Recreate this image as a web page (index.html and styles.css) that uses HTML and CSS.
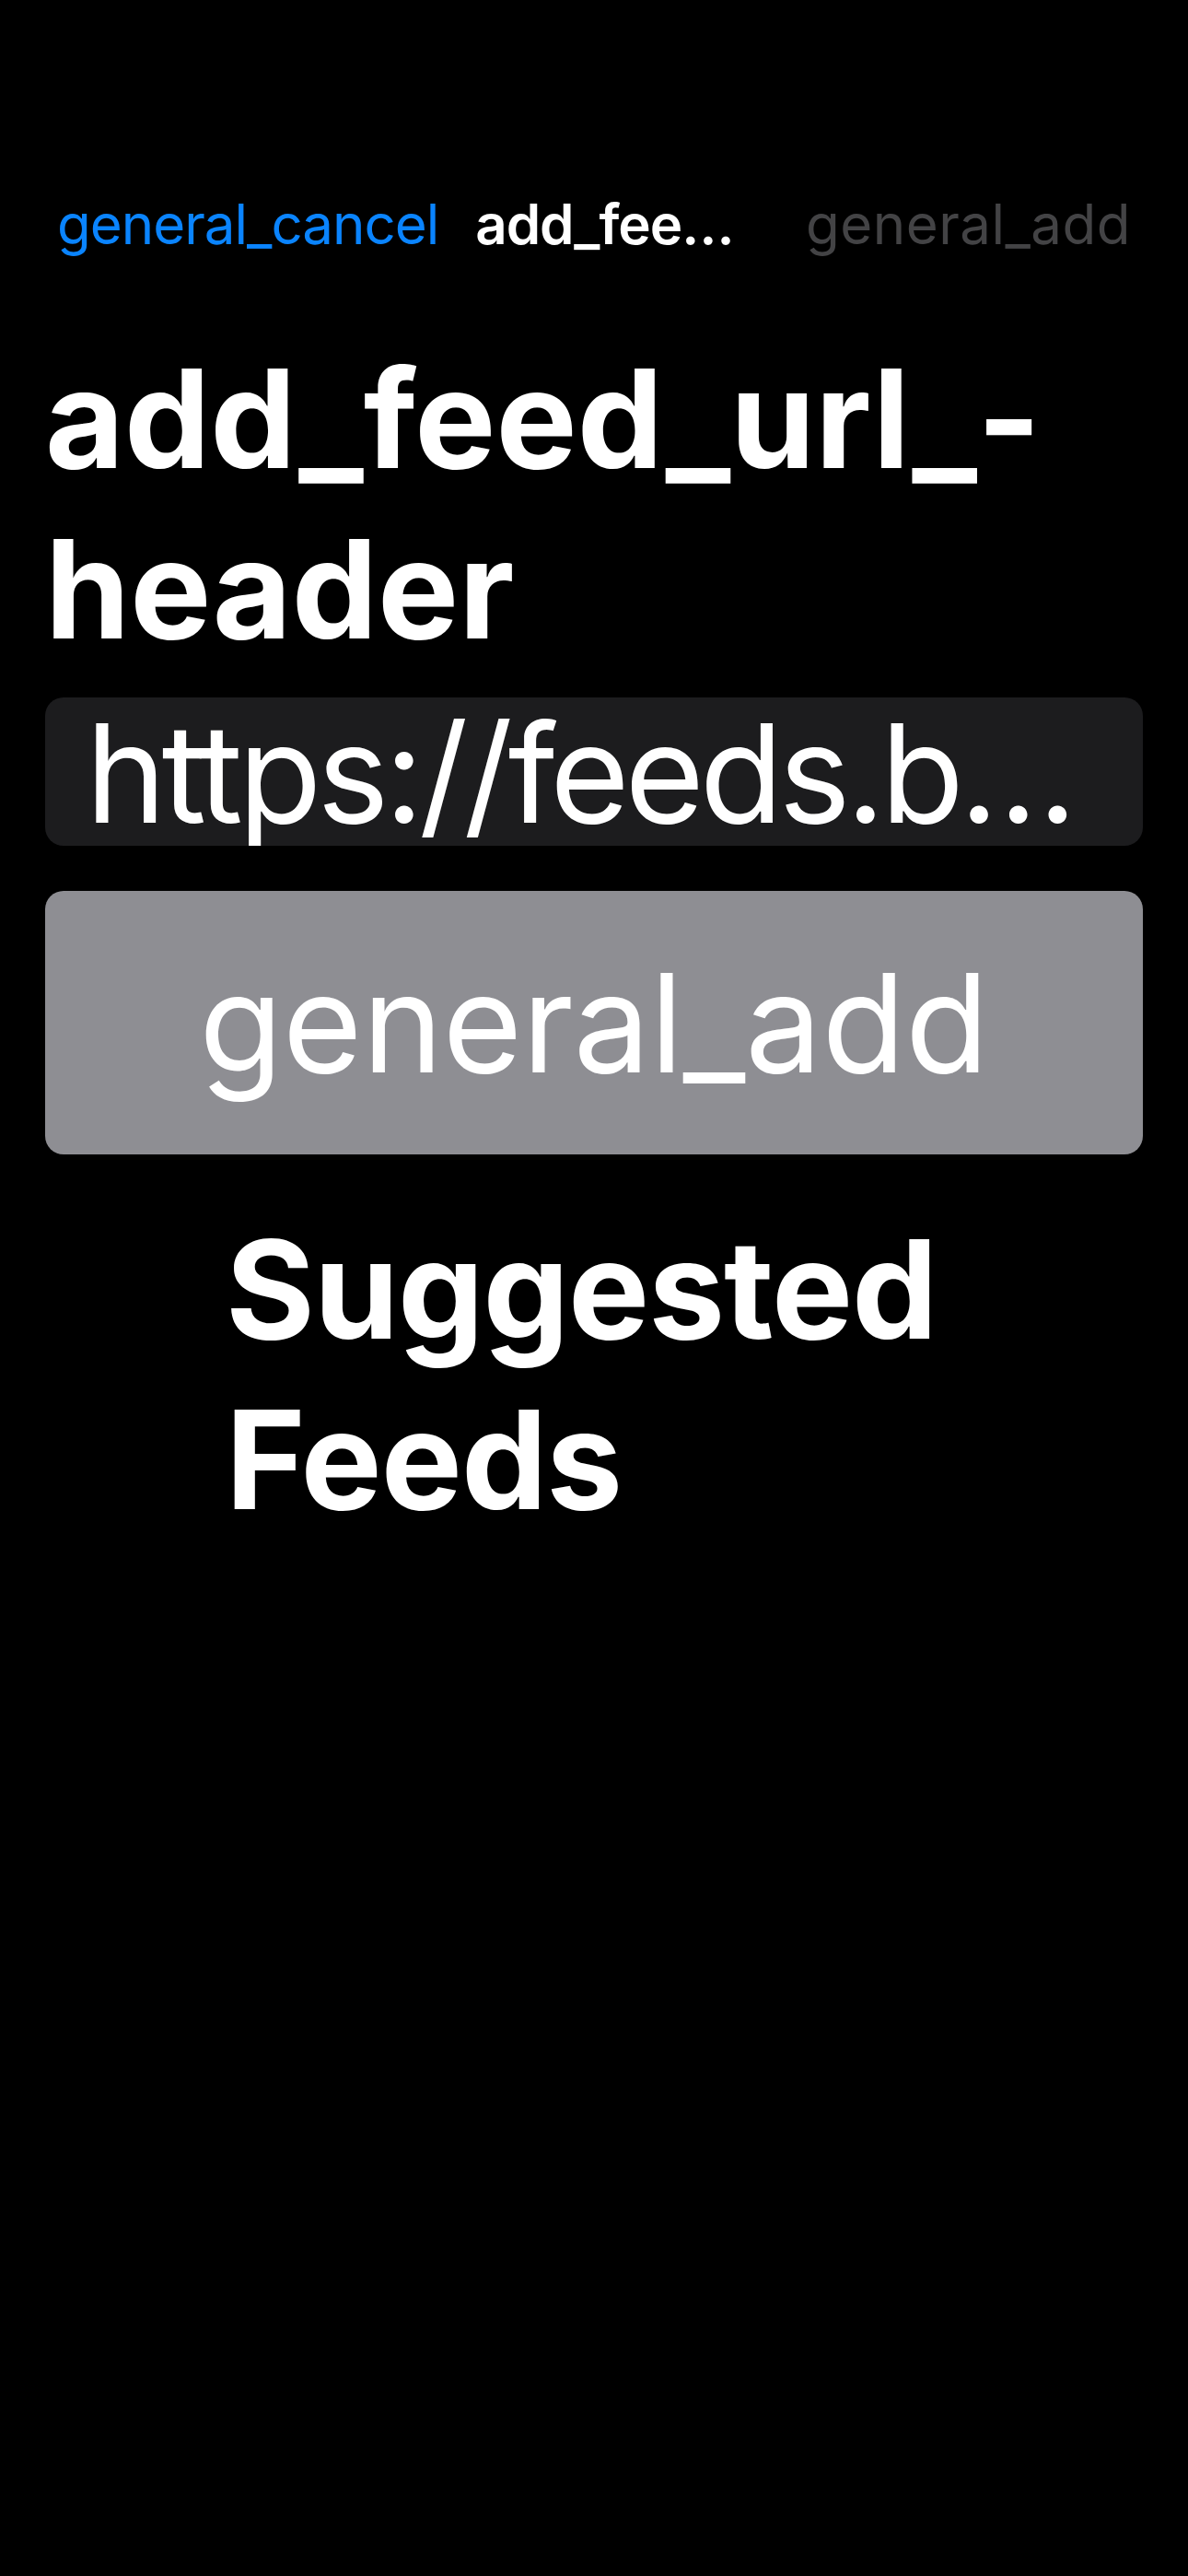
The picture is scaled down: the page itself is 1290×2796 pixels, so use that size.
FILE: index.html
```html
<!DOCTYPE html>
<html lang="en">
<head>
<meta charset="utf-8">
<title>add_feed_url_header</title>
<link rel="stylesheet" href="styles.css">
</head>
<body>
<div class="screen">
  <nav class="nav">
    <span class="nav-cancel">general_cancel</span>
    <span class="nav-title">add_fee…</span>
    <span class="nav-add">general_add</span>
  </nav>
  <main class="content">
    <h1 class="heading">add_feed_url_-<br>header</h1>
    <div class="field">https://feeds.b…</div>
    <div class="add-button">general_add</div>
    <h2 class="section-title">Suggested Feeds</h2>
  </main>
</div>
</body>
</html>
```
FILE: styles.css
```css
html, body {
  margin: 0;
  padding: 0;
  background: #000;
}
body {
  font-family: Inter, "Noto Sans", "Liberation Sans", sans-serif;
  color: #fff;
}
.screen {
  width: 1290px;
  min-height: 2796px;
  padding-top: 207px;
  box-sizing: border-box;
}
.nav {
  display: flex;
  align-items: baseline;
  height: 72px;
  padding: 0 62px;
  font-size: 60px;
  line-height: 72px;
  letter-spacing: -1px;
  white-space: nowrap;
}
.nav-cancel {
  color: #0a84ff;
}
.nav-title {
  margin-left: 40px;
  font-weight: 600;
  color: #fff;
}
.nav-add {
  margin-left: auto;
  color: #434345;
  letter-spacing: 0.5px;
}
.content {
  padding: 0 49px;
}
.heading {
  margin: 83px 0 0 0;
  font-size: 148px;
  line-height: 185px;
  font-weight: 700;
}
.field {
  margin-top: 25px;
  height: 161px;
  box-sizing: border-box;
  padding: 4px 0 0 44px;
  background: #1c1c1e;
  border-radius: 20px;
  font-size: 148px;
  line-height: 157px;
  letter-spacing: -5px;
  white-space: nowrap;
  overflow: hidden;
}
.add-button {
  margin-top: 49px;
  height: 286px;
  box-sizing: border-box;
  padding-top: 2px;
  background: #8e8e93;
  border-radius: 20px;
  font-size: 148px;
  line-height: 284px;
  text-align: center;
}
.section-title {
  margin: 54px 0 0 196px;
  font-size: 148px;
  line-height: 185px;
  font-weight: 700;
  letter-spacing: -1px;
}
```
